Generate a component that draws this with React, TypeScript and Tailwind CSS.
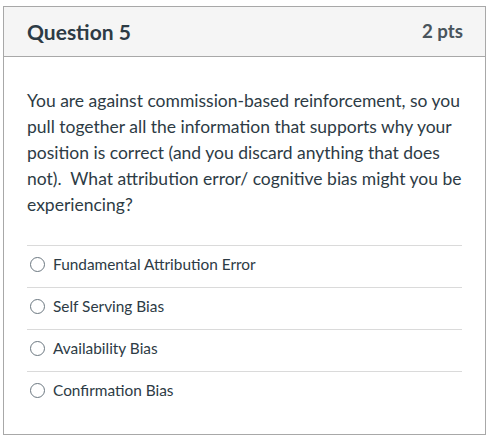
const answers = [
  "Fundamental Attribution Error",
  "Self Serving Bias",
  "Availability Bias",
  "Confirmation Bias",
]

export default function App() {
  return (
    <div className="w-[492px] h-[439px] bg-white pt-[6px] pl-[3px] font-['Lato','Liberation_Sans',sans-serif] text-[#2d3b45]">
      <div className="w-[483px] h-[429px] border border-[#a8a8a8] flex flex-col">
        {/* Header */}
        <div className="h-[50px] shrink-0 bg-[#f5f5f5] border-b border-[#a8a8a8] flex items-center justify-between pl-[23px] pr-[22px]">
          <h2 className="text-[21px] font-bold leading-none">Question 5</h2>
          <span className="text-[18.7px] font-bold text-[#49545c] leading-none">2 pts</span>
        </div>

        {/* Body */}
        <div className="pt-[31px] px-[23px]">
          <p className="text-[17.5px] leading-[26px]">
            You are against commission-based reinforcement, so you pull together all the information that supports why your position is correct (and you discard anything that does not).&nbsp; What attribution error/ cognitive bias might you be experiencing?
          </p>

          <div className="mt-[27px]">
            {answers.map((a) => (
              <label
                key={a}
                className="flex items-center gap-[8px] border-t border-[#dadada] pt-[8px] pb-[12px] pl-[3px]"
              >
                <span className="w-[15px] h-[15px] rounded-full border border-[#6b7780] bg-white shrink-0" />
                <span className="text-[15.4px] leading-[21px]">{a}</span>
              </label>
            ))}
          </div>
        </div>
      </div>
    </div>
  )
}
